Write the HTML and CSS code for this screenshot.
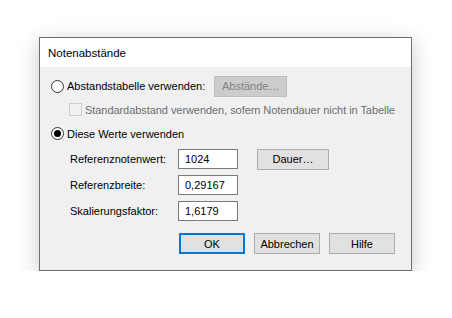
FILE: index.html
```html
<!DOCTYPE html>
<html lang="de">
<head>
<meta charset="utf-8">
<title>Notenabstände</title>
<link rel="stylesheet" href="styles.css">
</head>
<body>
<div class="dialog">
  <div class="titlebar">Notenabstände</div>
  <div class="content">
    <div class="row row-first">
      <span class="radio"></span>
      <span class="label">Abstandstabelle verwenden:</span>
      <span class="btn btn-disabled btn-abst">Abstände…</span>
    </div>
    <div class="row row-check">
      <span class="checkbox"></span>
      <span class="label label-disabled">Standardabstand verwenden, sofern Notendauer nicht in Tabelle</span>
    </div>
    <div class="row row-radio2">
      <span class="radio radio-on"><span class="dot"></span></span>
      <span class="label">Diese Werte verwenden</span>
    </div>
    <div class="fields">
      <div class="field">
        <span class="flabel">Referenznotenwert:</span>
        <span class="input">1024</span>
        <span class="btn btn-dauer">Dauer…</span>
      </div>
      <div class="field">
        <span class="flabel">Referenzbreite:</span>
        <span class="input">0,29167</span>
      </div>
      <div class="field">
        <span class="flabel">Skalierungsfaktor:</span>
        <span class="input">1,6179</span>
      </div>
    </div>
    <div class="actions">
      <span class="btn btn-action btn-default">OK</span>
      <span class="btn btn-action">Abbrechen</span>
      <span class="btn btn-action">Hilfe</span>
    </div>
  </div>
</div>
</body>
</html>
```
FILE: styles.css
```css
html, body {
  margin: 0;
  padding: 0;
  background: #ffffff;
}
body {
  padding: 37px 0 0 39px;
  font-family: "Liberation Sans", Arial, sans-serif;
  font-size: 11px;
  color: #000;
}
.dialog {
  box-sizing: border-box;
  width: 373px;
  height: 234px;
  border: 1px solid #6f6f6f;
  background: #f0f0f0;
  box-shadow: 0 5px 20px rgba(0, 0, 0, 0.22);
  display: flex;
  flex-direction: column;
}
.titlebar {
  height: 29px;
  background: #ffffff;
  display: flex;
  align-items: center;
  padding-left: 8px;
  font-size: 11.5px;
}
.content {
  flex: 1;
  display: flex;
  flex-direction: column;
}
.row {
  display: flex;
  align-items: center;
}
.row-first {
  margin-top: 9px;
  padding-left: 11px;
  height: 20px;
}
.radio {
  box-sizing: border-box;
  width: 13px;
  height: 13px;
  border: 1px solid #333;
  border-radius: 50%;
  background: #fff;
  display: flex;
  align-items: center;
  justify-content: center;
  flex: none;
}
.radio .dot {
  width: 7px;
  height: 7px;
  border-radius: 50%;
  background: #000;
}
.label {
  margin-left: 3px;
  white-space: nowrap;
}
.label-disabled {
  color: #6d6d6d;
  letter-spacing: -0.06px;
}
.btn {
  box-sizing: border-box;
  display: flex;
  align-items: center;
  justify-content: center;
  height: 21px;
  background: #e1e1e1;
  border: 1px solid #adadad;
  white-space: nowrap;
}
.btn-disabled {
  background: #cccccc;
  border-color: #bfbfbf;
  color: #838383;
}
.btn-abst {
  width: 73px;
  margin-left: 9px;
}
.row-check {
  margin-top: 7px;
  padding-left: 29px;
  height: 13px;
}
.checkbox {
  box-sizing: border-box;
  width: 13px;
  height: 13px;
  border: 1px solid #cccccc;
  background: #f0f0f0;
  flex: none;
}
.row-check .label {
  margin-left: 3px;
}
.row-radio2 {
  margin-top: 11px;
  padding-left: 11px;
  height: 13px;
}
.fields {
  margin-top: 9px;
  display: flex;
  flex-direction: column;
  gap: 6px;
  padding-left: 30px;
}
.field {
  display: flex;
  align-items: center;
  height: 20px;
}
.flabel {
  width: 108px;
  white-space: nowrap;
}
.input {
  box-sizing: border-box;
  width: 60px;
  height: 20px;
  border: 1px solid #7a7a7a;
  background: #fff;
  display: flex;
  align-items: center;
  padding-left: 6px;
}
.btn-dauer {
  width: 72px;
  margin-left: 19px;
}
.actions {
  margin-top: 12px;
  display: flex;
  gap: 9px;
  padding-left: 139px;
}
.btn-action {
  width: 66px;
}
.btn-default {
  border: 2px solid #0078d7;
}
```
